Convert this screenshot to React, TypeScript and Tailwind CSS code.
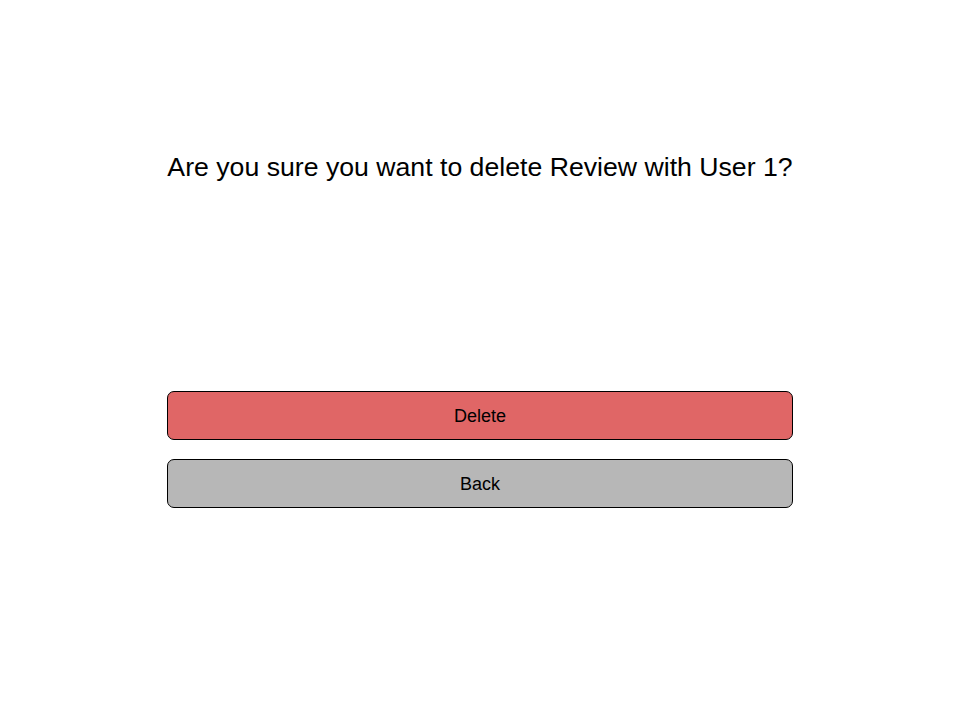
export default function App() {
  return (
    <div className="min-h-[720px] w-full bg-white flex flex-col items-center pt-[152px]" style={{ fontFamily: '"Liberation Sans", Arial, sans-serif' }}>
      <div className="w-[626px] flex flex-col">
        <h1 className="text-center text-[26.67px] leading-[30px] text-black whitespace-nowrap">
          Are you sure you want to delete Review with User 1?
        </h1>
        <div className="mt-[209px] flex flex-col gap-[19px]">
          <button className="h-[49px] w-full rounded-[7px] border border-black bg-[#e06666] pt-[2px] text-[18px] text-black">
            Delete
          </button>
          <button className="h-[49px] w-full rounded-[7px] border border-black bg-[#b7b7b7] pt-[2px] text-[18px] text-black">
            Back
          </button>
        </div>
      </div>
    </div>
  );
}
